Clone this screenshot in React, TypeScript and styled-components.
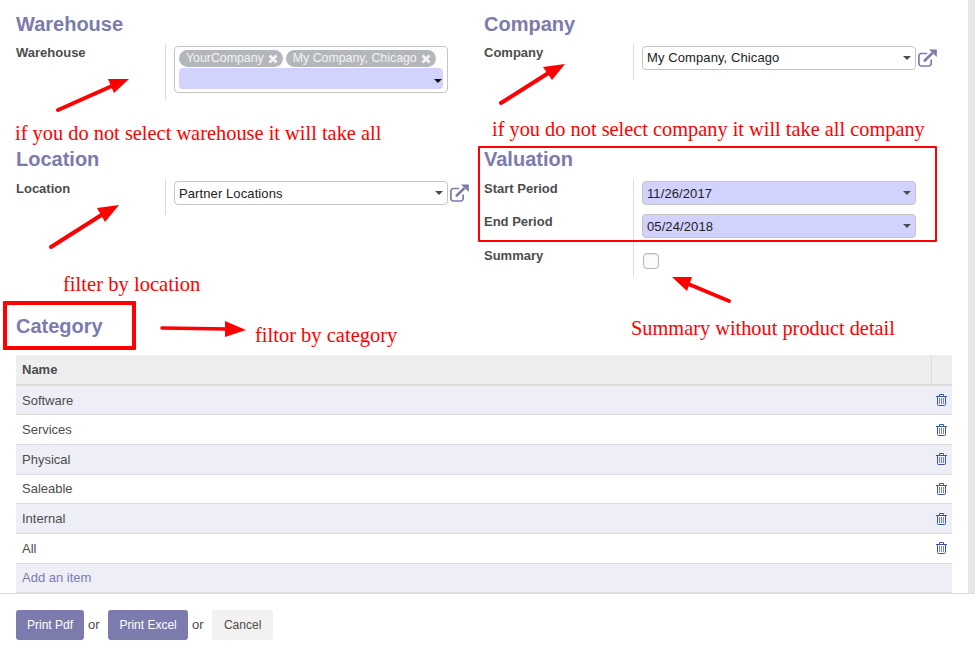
import React from "react";
import styled, { createGlobalStyle } from "styled-components";

const Global = createGlobalStyle`
  html, body { margin: 0; padding: 0; background: #fff; }
  body { font-family: "Liberation Sans", Arial, sans-serif; font-size: 13px; color: #4c4c4c; overflow: hidden; }
`;

const Page = styled.div`
  position: relative;
  width: 975px;
  height: 655px;
  overflow: hidden;
  display: flex;
  flex-direction: column;
`;
const Top = styled.div`
  display: flex;
  height: 593px;
`;
const Sheet = styled.main`
  flex: 1;
  padding: 0 16px;
  min-width: 0;
`;
const Strip = styled.div`
  width: 7px;
  background: #e6e6e6;
`;
const Columns = styled.div`
  display: grid;
  grid-template-columns: 468px 468px;
  grid-template-rows: 135px 142px;
`;
const Group = styled.section``;
const Title = styled.h2<{ $gap?: number; $top?: number }>`
  margin: 0;
  padding-top: ${(p) => p.$top ?? 14}px;
  margin-bottom: ${(p) => p.$gap ?? 10}px;
  font-size: 20px;
  line-height: 20px;
  font-weight: bold;
  color: #7c7bad;
`;
const Row = styled.div<{ $h: number }>`
  display: grid;
  grid-template-columns: 149px 1fr;
  height: ${(p) => p.$h}px;
`;
const Label = styled.label<{ $top?: number }>`
  font-weight: bold;
  font-size: 13px;
  line-height: 16px;
  padding-top: ${(p) => p.$top ?? 1}px;
  color: #4c4c4c;
`;
const FieldCell = styled.div`
  border-left: 1px solid #dcdcdc;
  padding: 2px 0 0 8px;
  display: flex;
  align-items: flex-start;
  gap: 2px;
`;
const Select = styled.div<{ $required?: boolean; $lh?: number }>`
  position: relative;
  box-sizing: border-box;
  width: 274px;
  height: 24px;
  line-height: ${(p) => p.$lh ?? 24}px;
  padding-left: 4px;
  font-size: 13px;
  letter-spacing: 0.1px;
  color: #222;
  border: 1px solid #c4c4c4;
  border-radius: 4px;
  background: ${(p) => (p.$required ? "#d2d2ff" : "#fff")};
`;
const Caret = styled.span`
  position: absolute;
  right: 4px;
  top: 9px;
  width: 0;
  height: 0;
  border-left: 4px solid transparent;
  border-right: 4px solid transparent;
  border-top: 4px solid #4c4c4c;
`;
const TagsBox = styled.div`
  box-sizing: border-box;
  width: 274px;
  height: 47px;
  padding: 3px 4px;
  border: 1px solid #c4c4c4;
  border-radius: 4px;
  display: flex;
  flex-direction: column;
  gap: 1px;
`;
const Tags = styled.div`
  display: flex;
  gap: 2.5px;
  white-space: nowrap;
`;
const Tag = styled.span`
  display: inline-flex;
  align-items: center;
  box-sizing: border-box;
  height: 17px;
  padding: 0 5.5px 2px 7px;
  gap: 4px;
  border-radius: 9px;
  background: #b3b7bb;
  color: #f4f4f4;
  font-size: 12.35px;
  svg { display: block; margin-top: 2px; }
`;
const TagInput = styled.div`
  position: relative;
  height: 22px;
  border-radius: 4px;
  background: #d2d2ff;
`;
const TagCaret = styled(Caret)`
  top: 11px;
  right: 1px;
  border-top-color: #111;
`;
const LinkIcon = styled.svg`
  width: 19px;
  height: 18px;
  margin-top: 3px;
  color: #7c7bad;
`;
const Check = styled.span`
  box-sizing: border-box;
  display: block;
  width: 16px;
  height: 16px;
  margin: 6px 0 0 1px;
  border: 1px solid #b5b5b5;
  border-radius: 4px;
  background: #fbfbfb;
  box-shadow: inset 0 1px 2px rgba(0, 0, 0, 0.08);
`;
const Table = styled.table`
  width: 936px;
  border-collapse: collapse;
  table-layout: fixed;
  font-size: 13px;
`;
const HeadCell = styled.th<{ $narrow?: boolean }>`
  height: 30px;
  padding: 0 6px;
  box-sizing: border-box;
  width: ${(p) => (p.$narrow ? "21px" : "auto")};
  text-align: left;
  font-weight: bold;
  background: #eeeeee;
  border-bottom: 2px solid #dcdcdc;
  border-left: ${(p) => (p.$narrow ? "1px solid #dcdcdc" : "0")};
`;
const BodyRow = styled.tr<{ $odd: boolean }>`
  background: ${(p) => (p.$odd ? "#eeeef6" : "#fff")};
  td { height: 29.71px; box-sizing: border-box; padding: 0 6px; border-bottom: 1px solid #dddddd; }
`;
const TrashCell = styled.td`
  padding: 0 !important;
  svg { display: block; margin: 0 0 0 5px; }
`;
const TrashIcon = styled.svg`
  width: 11px;
  height: 12px;
  color: #3f55a8;
`;
const AddLink = styled.span`
  color: #7c7bad;
  position: relative;
  top: -1px;
`;
const Footer = styled.footer`
  flex: 1;
  border-top: 1px solid #dcdcdc;
  padding: 16px 16px 0;
  display: flex;
  align-items: flex-start;
  gap: 4px;
`;
const Button = styled.button<{ $primary?: boolean; $w: number }>`
  width: ${(p) => p.$w}px;
  height: 30px;
  border: 0;
  padding: 0;
  border-radius: 3px;
  font: 12px "Liberation Sans", Arial, sans-serif;
  background: ${(p) => (p.$primary ? "#7c7bad" : "#f2f1ef")};
  color: ${(p) => (p.$primary ? "#fff" : "#4c4c4c")};
`;
const Or = styled.span`
  line-height: 30px;
  font-size: 13px;
  margin-right: 4.5px;
`;
const Overlay = styled.svg`
  position: absolute;
  left: 0;
  top: 0;
  width: 975px;
  height: 655px;
  pointer-events: none;
`;
const Note = styled.div<{ $x: number; $y: number; $size?: number }>`
  position: absolute;
  left: ${(p) => p.$x}px;
  top: ${(p) => p.$y}px;
  font-family: "Liberation Serif", "Times New Roman", serif;
  font-size: ${(p) => p.$size ?? 20.35}px;
  line-height: 24px;
  color: #ff0000;
  white-space: nowrap;
`;
const RedBox = styled.div<{ $x: number; $y: number; $w: number; $h: number; $b: number }>`
  position: absolute;
  box-sizing: border-box;
  left: ${(p) => p.$x}px;
  top: ${(p) => p.$y}px;
  width: ${(p) => p.$w}px;
  height: ${(p) => p.$h}px;
  border: ${(p) => p.$b}px solid #ff0000;
  border-radius: 1px;
`;

const External = () => (
  <LinkIcon viewBox="0 0 19 18" fill="none" stroke="currentColor">
    <path d="M13.2 10.5v4a2.5 2.5 0 0 1-2.5 2.5H3.4a2.5 2.5 0 0 1-2.5-2.5V7a2.5 2.5 0 0 1 2.5-2.5h5.8" strokeWidth="1.7" />
    <path d="M6 12.2 14.5 4" strokeWidth="2.6" />
    <path d="M11 .4h7.8v7.6z" fill="currentColor" stroke="none" />
  </LinkIcon>
);
const Cross = () => (
  <svg width="10" height="10" viewBox="0 0 10 10" stroke="#f4f4f4" strokeWidth="2.7">
    <path d="M1.5 1.5 8.5 8.5M8.5 1.5 1.5 8.5" />
  </svg>
);
const Trash = () => (
  <TrashIcon viewBox="0 0 11 12" fill="none" stroke="currentColor" strokeWidth="1">
    <path d="M0 2.5h11M3.5 2.5V.5h4v2M1.5 2.5v8a1 1 0 0 0 1 1h6a1 1 0 0 0 1-1v-8" />
    <path d="M3.5 4v6M5.5 4v6M7.5 4v6" strokeOpacity="0.7" />
  </TrashIcon>
);

const arrows: { line: number[]; head: string; w: number }[] = [
  { line: [58, 110, 112, 86], head: "129,79 108,79 114,93", w: 4 },
  { line: [501, 103, 550, 72], head: "565,64 543,67 552,80", w: 4 },
  { line: [51, 247, 103, 214], head: "119,205 97,208 105,222", w: 4 },
  { line: [162, 328, 228, 329], head: "246,330 225,321 225,337", w: 3.5 },
  { line: [729, 301, 686, 283], head: "672,277 692,277 687,291", w: 4 },
];
const categories = ["Software", "Services", "Physical", "Saleable", "Internal", "All"];

export default function App() {
  return (
    <Page>
      <Global />
      <Top>
        <Sheet>
          <Columns>
            <Group>
              <Title>Warehouse</Title>
              <Row $h={56}>
                <Label>Warehouse</Label>
                <FieldCell>
                  <TagsBox>
                    <Tags>
                      <Tag>YourCompany <Cross /></Tag>
                      <Tag>My Company, Chicago <Cross /></Tag>
                    </Tags>
                    <TagInput><TagCaret /></TagInput>
                  </TagsBox>
                </FieldCell>
              </Row>
            </Group>
            <Group>
              <Title>Company</Title>
              <Row $h={36}>
                <Label>Company</Label>
                <FieldCell>
                  <Select $lh={22}>My Company, Chicago<Caret /></Select>
                  <External />
                </FieldCell>
              </Row>
            </Group>
            <Group>
              <Title>Location</Title>
              <Row $h={36}>
                <Label $top={2}>Location</Label>
                <FieldCell>
                  <Select>Partner Locations<Caret /></Select>
                  <External />
                </FieldCell>
              </Row>
            </Group>
            <Group>
              <Title>Valuation</Title>
              <Row $h={33}>
                <Label $top={2}>Start Period</Label>
                <FieldCell><Select $required>11/26/2017<Caret /></Select></FieldCell>
              </Row>
              <Row $h={33}>
                <Label $top={2}>End Period</Label>
                <FieldCell><Select $required>05/24/2018<Caret /></Select></FieldCell>
              </Row>
              <Row $h={32}>
                <Label $top={3}>Summary</Label>
                <FieldCell><Check /></FieldCell>
              </Row>
            </Group>
          </Columns>
          <Title $top={39} $gap={19}>Category</Title>
          <Table>
            <thead>
              <tr>
                <HeadCell>Name</HeadCell>
                <HeadCell $narrow />
              </tr>
            </thead>
            <tbody>
              {categories.map((c, i) => (
                <BodyRow key={c} $odd={i % 2 === 0}>
                  <td>{c}</td>
                  <TrashCell><Trash /></TrashCell>
                </BodyRow>
              ))}
              <BodyRow $odd>
                <td><AddLink>Add an item</AddLink></td>
                <td />
              </BodyRow>
            </tbody>
          </Table>
        </Sheet>
        <Strip />
      </Top>
      <Footer>
        <Button $primary $w={68}>Print Pdf</Button>
        <Or>or</Or>
        <Button $primary $w={80}>Print Excel</Button>
        <Or>or</Or>
        <Button $w={61}>Cancel</Button>
      </Footer>
      <Overlay viewBox="0 0 975 655">
        {arrows.map((a, i) => (
          <g key={i}>
            <line x1={a.line[0]} y1={a.line[1]} x2={a.line[2]} y2={a.line[3]} stroke="#ff0000" strokeWidth={a.w} strokeLinecap="round" />
            <polygon points={a.head} fill="#ff0000" />
          </g>
        ))}
      </Overlay>
      <RedBox $x={478} $y={146} $w={459} $h={96} $b={2} />
      <RedBox $x={3} $y={301} $w={133} $h={49} $b={4} />
      <Note $x={15} $y={121} $size={20.4}>if you do not select warehouse it will take all</Note>
      <Note $x={492} $y={117}>if you do not select company it will take all company</Note>
      <Note $x={63} $y={272} $size={20.6}>filter by location</Note>
      <Note $x={255} $y={323} $size={20.5}>filtor by category</Note>
      <Note $x={631} $y={316}>Summary without product detail</Note>
    </Page>
  );
}
